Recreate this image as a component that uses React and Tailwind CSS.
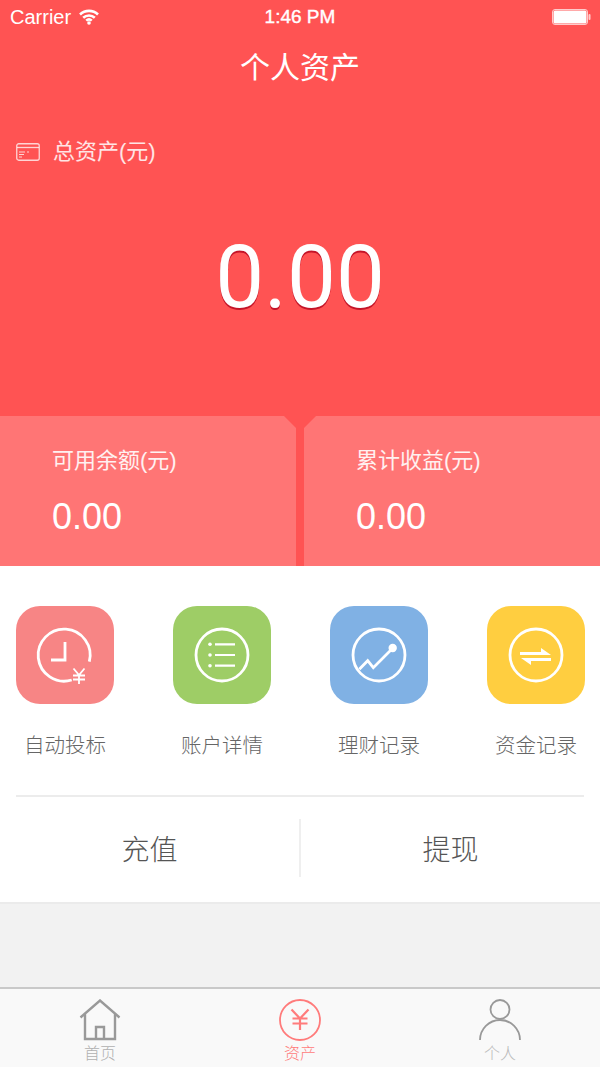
const cjk = "font-['Liberation_Sans','Noto_Sans_CJK_SC',sans-serif]"

function Ring() {
  return <circle cx="49" cy="49" r="26" fill="none" stroke="white" strokeWidth="2.8" />
}

function ClockIcon() {
  return (
    <svg width="98" height="98" viewBox="0 0 98 98" fill="none" stroke="white">
      <path d="M73.3 55.7A26 26 0 1 0 55.7 74" strokeWidth="2.8" />
      <path d="M49 36V54H35" strokeWidth="2.8" />
      <path d="M57.5 62.5l5.5 6.5 5.5-6.5M63 69v9M57 69.5h12M57 73.5h12" strokeWidth="1.8" />
    </svg>
  )
}

function ListIcon() {
  return (
    <svg width="98" height="98" viewBox="0 0 98 98" fill="none" stroke="white">
      <Ring />
      <path d="M42 38.3H62M42 49H62M42 59.7H62" strokeWidth="2.2" />
      <circle cx="37" cy="38.3" r="1.8" fill="white" stroke="none" />
      <circle cx="37" cy="49" r="1.8" fill="white" stroke="none" />
      <circle cx="37" cy="59.7" r="1.8" fill="white" stroke="none" />
    </svg>
  )
}

function ChartIcon() {
  return (
    <svg width="98" height="98" viewBox="0 0 98 98" fill="none" stroke="white">
      <Ring />
      <path d="M29.3 63.3L37.7 54.7L43.3 61.7L62.7 42.3" strokeWidth="2.8" />
      <circle cx="62.7" cy="42" r="4.2" fill="white" stroke="none" />
    </svg>
  )
}

function SwapIcon() {
  return (
    <svg width="98" height="98" viewBox="0 0 98 98" fill="white">
      <Ring />
      <path d="M33 49H64L54 42V46H33Z" />
      <path d="M64 52H34L44 59V55H64Z" />
    </svg>
  )
}

function CardIcon() {
  return (
    <svg width="24" height="18" viewBox="0 0 24 18" fill="none" stroke="white" strokeOpacity="0.75">
      <rect x="0.75" y="0.75" width="22.5" height="16.5" rx="2" strokeWidth="1.3" />
      <path d="M1 4.5H23" strokeWidth="1.3" />
      <path d="M3 9H9M11 9H13M3 11.5H8M3 14H6" strokeWidth="1.1" />
    </svg>
  )
}

function HomeIcon() {
  return (
    <svg width="42" height="42" viewBox="0 0 42 42" fill="none" stroke="#999" strokeWidth="2.4">
      <path d="M1.5 18.5L21 1.5L40.5 18.5M6 15V40H36V15M17 40V28H25V40" />
    </svg>
  )
}

function YuanIcon() {
  return (
    <svg width="42" height="42" viewBox="0 0 42 42" fill="none" stroke="#ff7b7b" strokeWidth="1.8">
      <circle cx="21" cy="21" r="20" />
      <path d="M12.5 10.5L21 19.5L29.5 10.5M21 19.5V31M13.5 19.5H28.5M13.5 24.5H28.5" strokeWidth="2.2" />
    </svg>
  )
}

function PersonIcon() {
  return (
    <svg width="42" height="42" viewBox="0 0 42 42" fill="none" stroke="#999" strokeWidth="1.8">
      <circle cx="21" cy="10.5" r="9.5" />
      <path d="M1 41A20 20 0 0 1 41 41" />
    </svg>
  )
}

const shortcuts = [
  { label: '自动投标', bg: 'bg-[#f78585]', icon: <ClockIcon /> },
  { label: '账户详情', bg: 'bg-[#9ecd66]', icon: <ListIcon /> },
  { label: '理财记录', bg: 'bg-[#80b1e4]', icon: <ChartIcon /> },
  { label: '资金记录', bg: 'bg-[#ffce40]', icon: <SwapIcon /> },
]

const tabs = [
  { label: '首页', icon: <HomeIcon />, color: 'text-[#b0b0b0]' },
  { label: '资产', icon: <YuanIcon />, color: 'text-[#ff7b7b]' },
  { label: '个人', icon: <PersonIcon />, color: 'text-[#b8b8b8]' },
]

export default function App() {
  return (
    <div className={`w-[600px] h-[1067px] flex flex-col bg-[#f2f2f2] overflow-hidden ${cjk}`}>
      <header className="h-[416px] shrink-0 bg-[#ff5353] text-white flex flex-col">
        <div className="h-[34px] pl-[10px] pr-[9px] flex items-center justify-between relative text-[20px]">
          <div className="flex items-center gap-[8px]">
            <span>Carrier</span>
            <svg width="20" height="16" viewBox="0 0 20 16" fill="none" stroke="white" strokeWidth="2.6">
              <path d="M1 5.5A13 13 0 0 1 19 5.5M4.2 8.8A8.5 8.5 0 0 1 15.8 8.8M7.2 11.6A4.2 4.2 0 0 1 12.8 11.6" />
              <circle cx="10" cy="14" r="1.8" fill="white" stroke="none" />
            </svg>
          </div>
          <span className="absolute left-0 right-0 text-center text-[19px] [-webkit-text-stroke:0.4px_white]">1:46 PM</span>
          <svg width="39" height="18" viewBox="0 0 39 18">
            <rect x="0.5" y="1.5" width="35" height="15" rx="2.5" fill="none" stroke="white" strokeOpacity="0.7" />
            <rect x="1.5" y="2.5" width="33" height="13" rx="1.5" fill="white" />
            <rect x="36.5" y="6" width="2" height="6" rx="1" fill="white" fillOpacity="0.7" />
          </svg>
        </div>
        <h1 className="mt-[14px] text-[30px] leading-[40px] text-center font-normal">个人资产</h1>
        <div className="mt-[48px] pl-[16px] flex items-center gap-[13px] text-[22px] leading-[32px] text-white/85">
          <CardIcon />
          <span>总资产(元)</span>
        </div>
        <div className="mt-[59px] text-center text-[87px] leading-[100px] font-['Roboto',sans-serif] [text-shadow:0_2px_0_#c41428]">
          0.00
        </div>
      </header>

      <section className="h-[150px] shrink-0 bg-[#ff5353] flex justify-between text-white">
        <div className="w-[296px] bg-[#ff7575] pl-[52px] pt-[29px] [clip-path:polygon(0_0,284px_0,296px_12px,296px_100%,0_100%)]">
          <div className="text-[22px] leading-[32px] text-white/90">可用余额(元)</div>
          <div className="mt-[18px] text-[36px] leading-[44px]">0.00</div>
        </div>
        <div className="w-[296px] bg-[#ff7575] pl-[52px] pt-[29px] [clip-path:polygon(12px_0,100%_0,100%_100%,0_100%,0_12px)]">
          <div className="text-[22px] leading-[32px] text-white/90">累计收益(元)</div>
          <div className="mt-[18px] text-[36px] leading-[44px]">0.00</div>
        </div>
      </section>

      <section className="h-[338px] shrink-0 bg-white border-b-2 border-[#ebebeb] px-[16px] pt-[40px]">
        <div className="flex gap-[59px]">
          {shortcuts.map((item) => (
            <div key={item.label} className="w-[98px] flex flex-col items-center">
              <div className={`w-[98px] h-[98px] rounded-[24px] ${item.bg}`}>{item.icon}</div>
              <span className="mt-[27px] text-[20.5px] leading-[30px] font-light text-[#666666] whitespace-nowrap">{item.label}</span>
            </div>
          ))}
        </div>
        <div className="mt-[34px] h-[2px] bg-[#ececec]" />
        <div className="-mx-[16px] mt-[22px] h-[58px] flex text-[28px] font-light text-[#555555]">
          <div className="flex-1 text-center pt-[11px]">充值</div>
          <div className="w-[2px] bg-[#efefef]" />
          <div className="flex-1 text-center pt-[11px]">提现</div>
        </div>
      </section>

      <div className="flex-1" />

      <nav className="h-[80px] shrink-0 bg-[#f9f9f9] border-t-2 border-[#c9c9c9] flex">
        {tabs.map((tab) => (
          <div key={tab.label} className="flex-1 flex flex-col items-center pt-[10px]">
            <div className="h-[45px]">{tab.icon}</div>
            <span className={`text-[16px] leading-[20px] font-light ${tab.color}`}>{tab.label}</span>
          </div>
        ))}
      </nav>
    </div>
  )
}
